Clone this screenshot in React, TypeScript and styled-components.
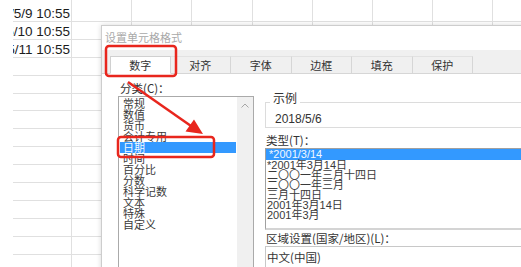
import React from 'react';
import styled, { createGlobalStyle } from 'styled-components';

const GlobalStyle = createGlobalStyle`
  html, body {
    margin: 0;
    padding: 0;
    background: #fff;
  }
  body {
    font-family: "Noto Sans CJK SC", "Liberation Sans", sans-serif;
  }
`;

const red = '#e8261d';
const gridLine = '#e0e0e0';
const selectBlue = '#3399ff';

const Screen = styled.div`
  position: relative;
  width: 521px;
  height: 267px;
  overflow: hidden;
  background: #fff;
`;

/* spreadsheet behind the dialog */
const Sheet = styled.div`
  display: flex;
  flex-direction: column;
`;

const SheetRow = styled.div<{ $first?: boolean }>`
  display: flex;
  flex: none;
  height: ${(p) => (p.$first ? '22px' : '17.9px')};
  padding-left: 13px;
`;

const Cell = styled.div<{ $first?: boolean }>`
  flex: none;
  box-sizing: border-box;
  width: ${(p) => (p.$first ? '59px' : '60.2px')};
  border-right: 1px solid ${gridLine};
  border-bottom: 1px solid ${gridLine};
  display: flex;
  align-items: flex-end;
  justify-content: flex-end;
  overflow: hidden;
  padding-right: 1px;
  font: 13.5px/14px 'Liberation Sans', Arial, sans-serif;
  color: #1c1c1c;
`;

const CellText = styled.span`
  flex: none;
  white-space: nowrap;
`;

/* format cells dialog */
const Dialog = styled.div`
  position: absolute;
  left: 101px;
  top: 25px;
  width: 470px;
  height: 290px;
  background: #fff;
  border: 1px solid #cdcdcd;
  box-shadow: 0 0 5px rgba(0, 0, 0, 0.16);
  display: flex;
  flex-direction: column;
`;

const TitleBar = styled.div`
  height: 24px;
  padding: 0 0 2px 3px;
  box-sizing: border-box;
  display: flex;
  align-items: center;
  font-size: 11px;
  color: #a9a9a9;
`;

const TabBar = styled.div`
  height: 24px;
  box-sizing: border-box;
  padding-left: 8px;
  background: #f0f0f0;
  border-bottom: 1px solid #d6d6d6;
  display: flex;
  align-items: flex-end;
`;

const Tab = styled.div<{ $active?: boolean }>`
  flex: none;
  width: 60.5px;
  height: 18px;
  margin-bottom: -1px;
  box-sizing: border-box;
  display: flex;
  align-items: center;
  justify-content: center;
  font-size: 11px;
  color: #333;
  background: ${(p) => (p.$active ? '#fff' : '#f0f0f0')};
  border-top: 1px solid ${(p) => (p.$active ? '#d0d0d0' : '#e2e2e2')};
  border-left: ${(p) => (p.$active ? '1px solid #d0d0d0' : 'none')};
  border-right: 1px solid #d6d6d6;
  border-bottom: 1px solid ${(p) => (p.$active ? '#fff' : '#d6d6d6')};
`;

const Body = styled.div`
  display: flex;
  gap: 11px;
  padding: 8px 0 0 16px;
`;

const LeftPane = styled.div`
  flex: none;
  width: 136px;
  display: flex;
  flex-direction: column;
`;

const RightPane = styled.div`
  flex: 1;
  min-width: 0;
  padding-top: 9px;
  display: flex;
  flex-direction: column;
`;

const FieldLabel = styled.div<{ $indent?: number }>`
  font-size: 11.5px;
  line-height: 12px;
  height: 12px;
  color: #333;
  padding-left: ${(p) => p.$indent ?? 1}px;
  white-space: nowrap;
`;

const CategoryBox = styled.div`
  margin-top: 2px;
  height: 190px;
  box-sizing: border-box;
  border: 1px solid #aaaaaa;
  display: flex;
`;

const CategoryItems = styled.div`
  flex: 1;
  padding: 1px 1px 0;
  display: flex;
  flex-direction: column;
`;

const ListItem = styled.div<{ $selected?: boolean; $tall?: boolean }>`
  flex: none;
  height: ${(p) => (p.$tall ? 11 : 10)}px;
  line-height: ${(p) => (p.$tall ? 11 : 10)}px;
  padding-left: ${(p) => (p.$tall ? 3 : 1)}px;
  font-size: 11px;
  white-space: nowrap;
  color: ${(p) => (p.$selected ? '#f2f8ff' : '#3a3a3a')};
  background: ${(p) => (p.$selected ? selectBlue : 'transparent')};
`;

const ScrollTrack = styled.div`
  flex: none;
  width: 16px;
  background: #f0f0f0;
  display: flex;
  justify-content: center;
  padding-top: 6px;
  box-sizing: border-box;
`;

const SampleGroup = styled.fieldset`
  margin: 0;
  padding: 0 0 1px;
  min-width: 0;
  border: 1px solid #dcdcdc;
`;

const SampleLegend = styled.legend`
  margin-left: 4px;
  padding: 0 3px 8px;
  font-size: 12px;
  line-height: 14px;
  color: #333;
`;

const SampleValue = styled.div`
  padding-left: 9px;
  font: 12px/13px 'Liberation Sans', Arial, sans-serif;
  color: #333;
`;

const TypeBox = styled.div`
  margin-top: 2px;
  height: 82px;
  box-sizing: border-box;
  border: 1px solid #a0a0a0;
  border-bottom: 2px solid #d4d4d4;
  display: flex;
  flex-direction: column;
  font-family: 'Liberation Sans', 'Noto Sans CJK SC', sans-serif;
`;

const LocaleBox = styled.div`
  margin-top: 2px;
  height: 30px;
  box-sizing: border-box;
  border: 1px solid #c8c8c8;
  padding: 3px 0 0 1px;
  font-size: 11.5px;
  line-height: 14px;
  color: #333;
`;

const Annotations = styled.svg`
  position: absolute;
  left: 0;
  top: 0;
  pointer-events: none;
`;

const Gap = styled.div<{ $h: number }>`
  height: ${(p) => p.$h}px;
  flex: none;
`;

const sheetRows = ['2018/5/9 10:55', '2018/5/10 10:55', '2018/5/11 10:55'];
const tabs = ['数字', '对齐', '字体', '边框', '填充', '保护'];
const categories = ['常规', '数值', '货币', '会计专用', '日期', '时间', '百分比', '分数', '科学记数', '文本', '特殊', '自定义'];
const dateTypes = ['*2001/3/14', '*2001年3月14日', '二〇〇一年三月十四日', '二〇〇一年三月', '三月十四日', '2001年3月14日', '2001年3月'];

const App: React.FC = () => {
  return (
    <Screen>
      <GlobalStyle />
      <Sheet>
        {Array.from({ length: 15 }).map((_, r) => (
          <SheetRow key={r} $first={r === 0}>
            {Array.from({ length: 9 }).map((__, c) => (
              <Cell key={c} $first={c === 0}>
                {c === 0 && sheetRows[r] && <CellText>{sheetRows[r]}</CellText>}
              </Cell>
            ))}
          </SheetRow>
        ))}
      </Sheet>

      <Dialog>
        <TitleBar>设置单元格格式</TitleBar>
        <TabBar>
          {tabs.map((t, i) => (
            <Tab key={t} $active={i === 0}>
              {t}
            </Tab>
          ))}
        </TabBar>
        <Body>
          <LeftPane>
            <FieldLabel $indent={2}>分类(C)：</FieldLabel>
            <CategoryBox>
              <CategoryItems>
                {categories.map((c) => (
                  <ListItem key={c} $tall $selected={c === '日期'}>
                    {c}
                  </ListItem>
                ))}
              </CategoryItems>
              <ScrollTrack>
                <svg width="8" height="5" viewBox="0 0 8 5">
                  <polyline points="0.5,4.5 4,1 7.5,4.5" fill="none" stroke="#a6a6a6" strokeWidth="1" />
                </svg>
              </ScrollTrack>
            </CategoryBox>
          </LeftPane>
          <RightPane>
            <SampleGroup>
              <SampleLegend>示例</SampleLegend>
              <SampleValue>2018/5/6</SampleValue>
            </SampleGroup>
            <Gap $h={6} />
            <FieldLabel>类型(T)：</FieldLabel>
            <TypeBox>
              {dateTypes.map((d, i) => (
                <ListItem key={d} $tall={i === 0} $selected={i === 0}>
                  {d}
                </ListItem>
              ))}
            </TypeBox>
            <Gap $h={2} />
            <FieldLabel>区域设置(国家/地区)(L)：</FieldLabel>
            <LocaleBox>中文(中国)</LocaleBox>
          </RightPane>
        </Body>
      </Dialog>

      <Annotations width="521" height="267" viewBox="0 0 521 267">
        <rect x="106" y="46" width="70" height="30" rx="3" fill="none" stroke={red} strokeWidth="2.5" />
        <rect x="118" y="137" width="96" height="20" rx="3" fill="none" stroke={red} strokeWidth="2.5" />
        <line x1="128" y1="82" x2="191" y2="126" stroke={red} strokeWidth="2.5" />
        <polygon points="203,134 185.5,131.5 194,119.5" fill={red} />
      </Annotations>
    </Screen>
  );
};

export default App;
